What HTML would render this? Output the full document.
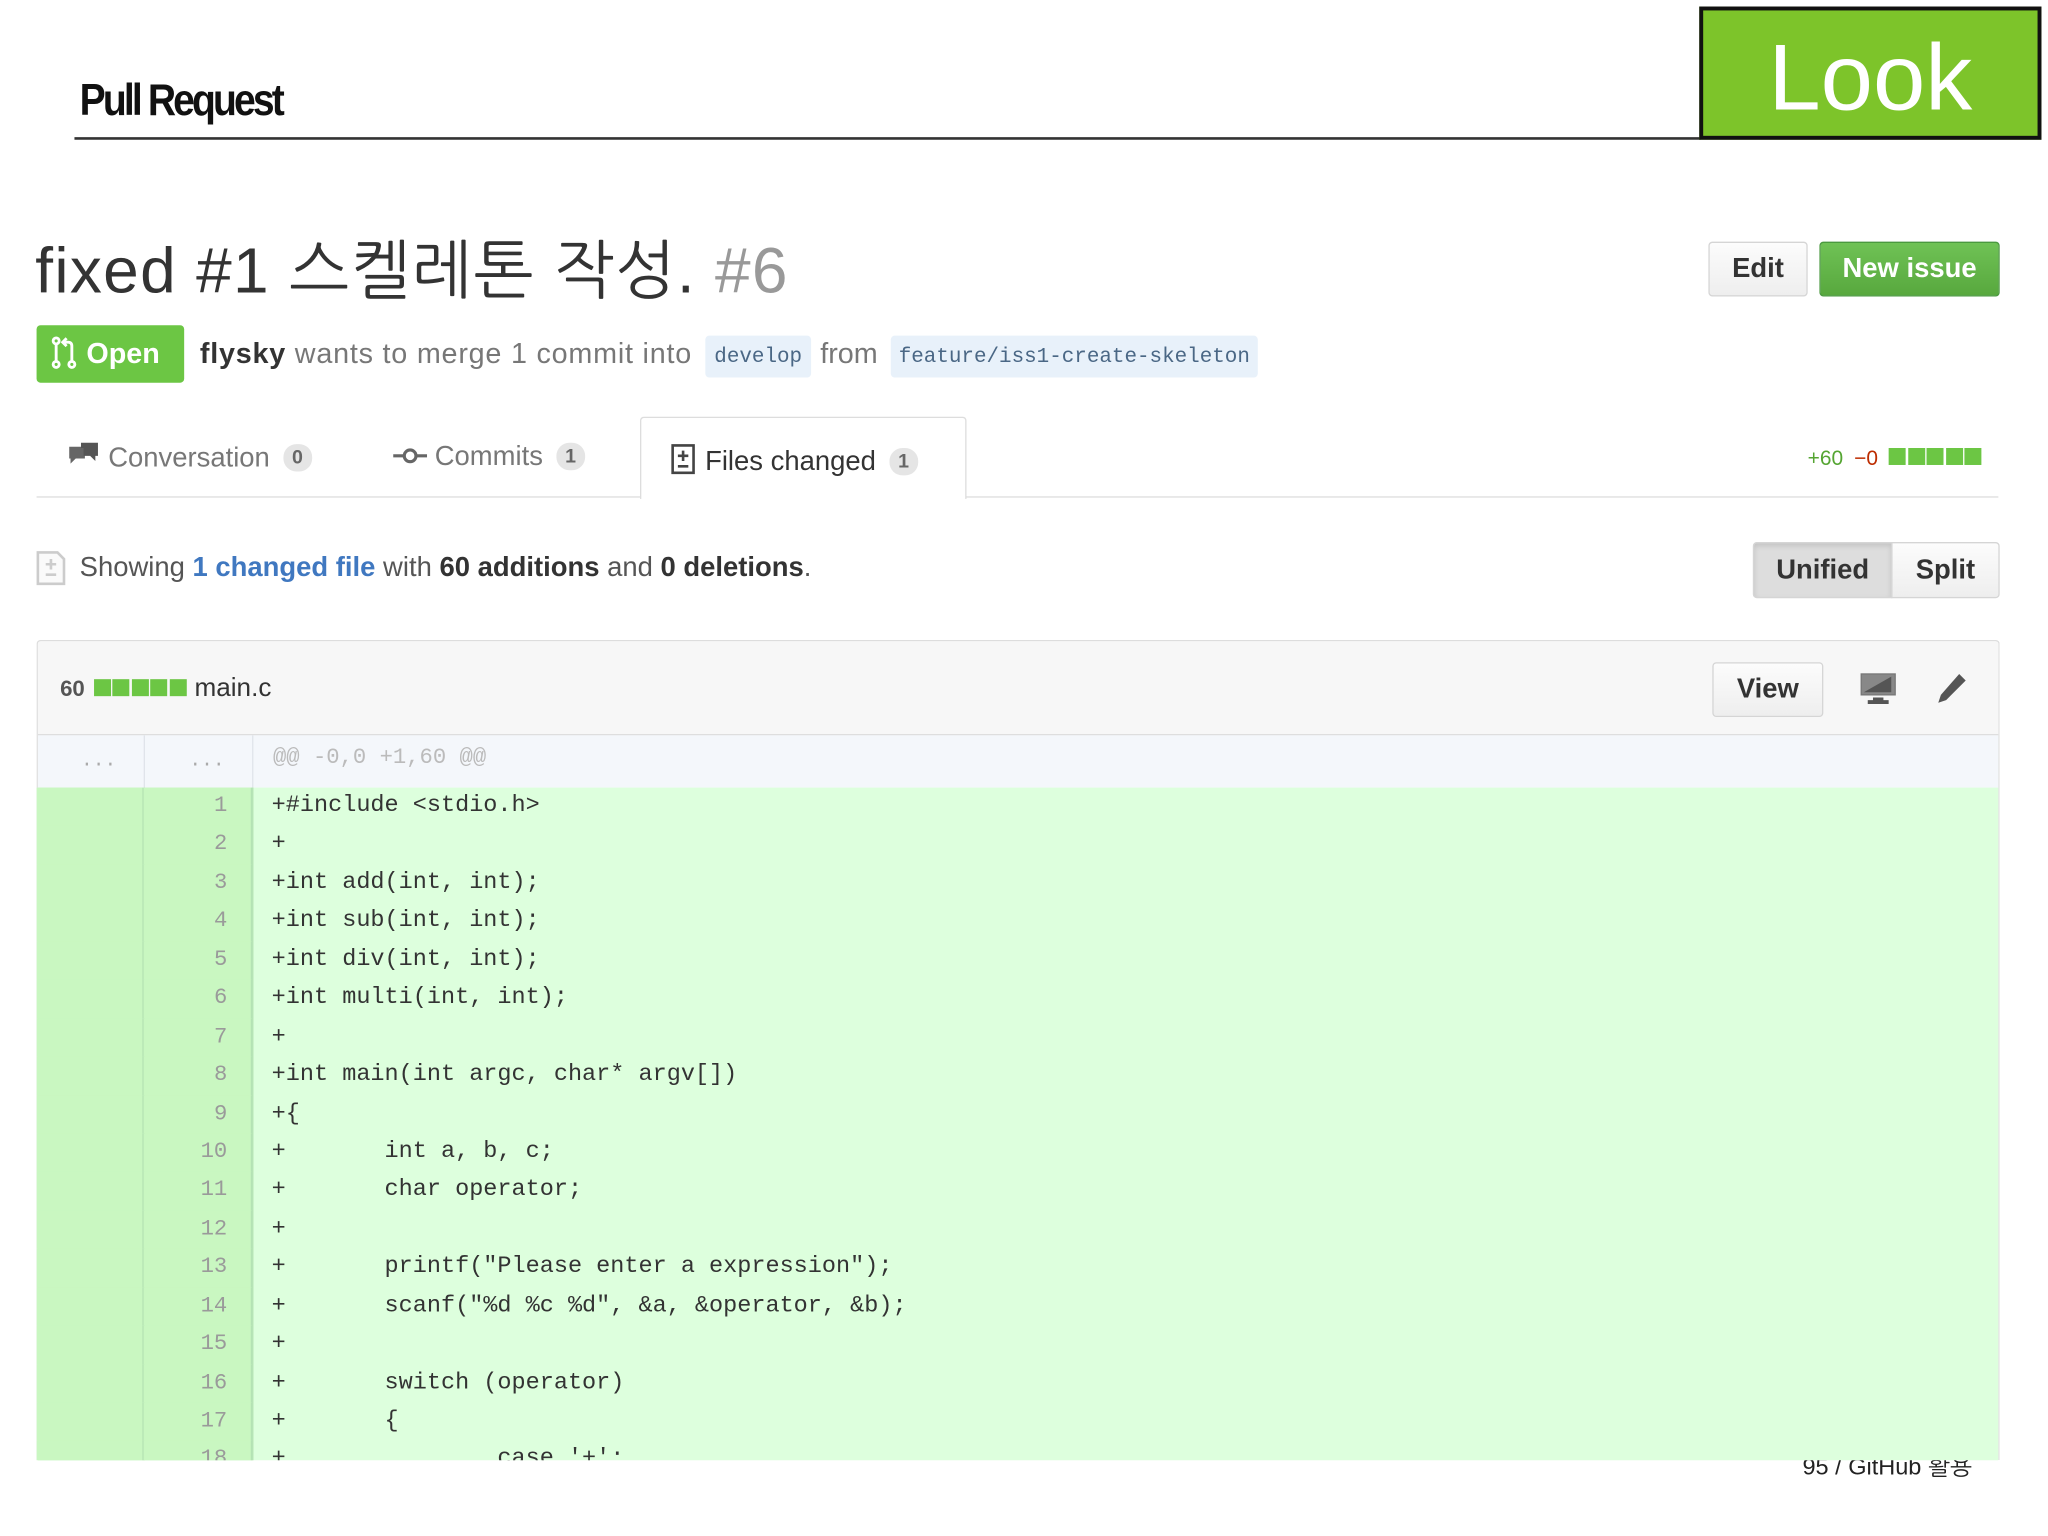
<!DOCTYPE html>
<html><head><meta charset="utf-8">
<style>
*{margin:0;padding:0;box-sizing:border-box}
html,body{width:2048px;height:1536px;overflow:hidden;background:#fff}
#w{position:absolute;left:0;top:0;width:1568px;height:1176px;transform:scale(1.30612);transform-origin:0 0;font-family:"Liberation Sans","NanumGothic","Noto Sans CJK KR",sans-serif;}
.a{position:absolute;white-space:nowrap}
.btn{position:absolute;border:1px solid #d5d5d5;border-radius:3px;background:linear-gradient(#fcfcfc,#eee);font-weight:bold;color:#333;text-align:center}
.mono{font-family:"Liberation Mono","DejaVu Sans Mono",monospace}
.cnt{display:inline-block;background:#e5e5e5;color:#666;border-radius:10px;font-size:15px;font-weight:bold;padding:2px 7px;margin-left:10px;vertical-align:2px}
.bars span{display:inline-block;width:13px;height:13px;background:#6cc644;margin-right:1.5px}
.row{position:absolute;left:0;width:1502px;height:29.44px;line-height:29.44px}
.g1{position:absolute;left:0;width:82px;height:100%;background:#c9f7c1;border-right:1px solid #b4e2b4}
.g2{position:absolute;left:82px;width:83px;height:100%;background:#c9f7c1;border-right:1px solid #b4e2b4;text-align:right;padding-right:18px;color:#9a9a9a;font-size:17px}
.cd{position:absolute;left:180px;font-size:18px;color:#333;white-space:pre}
</style></head><body><div id="w">
<div class="a" style="left:61px;top:58px;font-size:34px;font-weight:bold;letter-spacing:-2.5px;color:#111;transform:scaleX(.88);transform-origin:0 0">Pull Request</div>
<div class="a" style="left:57px;top:105px;width:1245px;height:2px;background:#333"></div>
<div class="a" style="left:1301px;top:5px;width:262px;height:102px;background:#7dc42a;border:3px solid #111;color:#fff;font-size:72px;text-align:center;line-height:104px">Look</div>

<div class="a" style="left:27px;top:177px;font-size:49px;color:#333;letter-spacing:1px">fixed #1 스켈레톤 작성. <span style="color:#999">#6</span></div>
<div class="btn" style="left:1308px;top:185px;width:76px;height:42px;line-height:40px;font-size:21px">Edit</div>
<div class="btn" style="left:1393px;top:185px;width:138px;height:42px;line-height:40px;font-size:21px;background:linear-gradient(#6fc255,#58a83e);border-color:#4a993e;color:#fff">New issue</div>

<div class="a" style="left:28px;top:249px;width:113px;height:44px;background:#6cc644;border-radius:3px;color:#fff;font-weight:bold;font-size:22px;line-height:44px;padding-left:10px">
<svg width="22" height="26" viewBox="0 0 22 26" style="vertical-align:-5px"><g fill="none" stroke="#fff" stroke-width="2.2"><circle cx="5" cy="4" r="2.3"/><circle cx="5" cy="22" r="2.3"/><circle cx="17" cy="22" r="2.3"/><path d="M5 6v14M17 20V8q0-3-3-3h-3M13 2l-3 3 3 3"/></g></svg> Open</div>
<div class="a" style="left:153px;top:258px;font-size:22px;color:#777;letter-spacing:0.6px"><b style="color:#333">flysky</b> wants to merge 1 commit into</div>
<div class="a mono" style="left:540px;top:257px;width:81px;height:32px;background:#e8f1fa;border-radius:3px;color:#4a6785;font-size:16px;line-height:32px;text-align:center">develop</div>
<div class="a" style="left:628px;top:258px;font-size:22px;color:#777">from</div>
<div class="a mono" style="left:682px;top:257px;width:281px;height:32px;background:#e8f1fa;border-radius:3px;color:#4a6785;font-size:16px;line-height:32px;text-align:center">feature/iss1-create-skeleton</div>

<div class="a" style="left:28px;top:380px;width:1502px;height:1px;background:#ddd"></div>
<div class="a" style="left:490px;top:319px;width:250px;height:63px;border:1px solid #ddd;border-bottom:none;border-radius:3px 3px 0 0;background:#fff"></div>
<div class="a" style="left:51px;top:338px;font-size:21px;color:#777"><svg width="26" height="22" viewBox="0 0 26 22" style="vertical-align:-3px"><path d="M2 4h12v9H7l-4 4v-4H2z" fill="#666"/><path d="M11 1h13v10h-2v4l-4-4h-5V5h-2z" fill="#555"/></svg> Conversation<span class="cnt">0</span></div>
<div class="a" style="left:301px;top:338px;font-size:21px;color:#777"><svg width="26" height="14" viewBox="0 0 26 14" style="vertical-align:0"><circle cx="13" cy="7" r="4.5" fill="none" stroke="#666" stroke-width="2.4"/><path d="M0 7h8M18 7h8" stroke="#666" stroke-width="2.4"/></svg> Commits<span class="cnt">1</span></div>
<div class="a" style="left:512px;top:338px;font-size:21px;color:#333"><svg width="22" height="26" viewBox="0 0 22 26" style="vertical-align:-4px"><path d="M3 3h16v21H3z" fill="none" stroke="#444" stroke-width="2"/><path d="M11 7v8M7 11h8M7 19h8" stroke="#444" stroke-width="2"/></svg> Files changed<span class="cnt">1</span></div>
<div class="a" style="left:1384px;top:343px;font-size:16px"><span style="color:#55a532">+60</span> <span style="color:#bd2c00;margin-left:4px">−0</span> <span class="bars" style="margin-left:4px"><span></span><span></span><span></span><span></span><span></span></span></div>

<div class="a" style="left:27px;top:421px"><svg width="24" height="28" viewBox="0 0 24 28"><path d="M2 2h15l5 5v19H2z" fill="#fafafa" stroke="#ccc" stroke-width="2"/><path d="M12 7v8M8 11h8M8 19h8" stroke="#ccc" stroke-width="2"/></svg></div>
<div class="a" style="left:61px;top:423px;font-size:21px;color:#555">Showing <b style="color:#4078c0">1 changed file</b> with <b style="color:#333">60 additions</b> and <b style="color:#333">0 deletions</b>.</div>
<div class="btn" style="left:1342px;top:415px;width:107px;height:43px;line-height:41px;font-size:21px;background:#ddd;border-radius:3px 0 0 3px;box-shadow:inset 0 2px 4px rgba(0,0,0,.12)">Unified</div>
<div class="btn" style="left:1448px;top:415px;width:83px;height:43px;line-height:41px;font-size:21px;border-radius:0 3px 3px 0">Split</div>

<div class="a" style="left:28px;top:490px;width:1503px;height:628px;border:1px solid #ddd;border-bottom:none;border-radius:3px 3px 0 0;overflow:hidden">
 <div style="position:absolute;left:0;top:0;width:100%;height:72px;background:#f7f7f7;border-bottom:1px solid #ddd"></div>
 <div class="a" style="left:17px;top:25px;font-size:17px;color:#555;font-weight:bold">60 <span class="bars" style="margin-left:2px"><span></span><span></span><span></span><span></span><span></span></span> <span style="font-weight:normal;font-size:20px;color:#333">main.c</span></div>
 <div class="btn" style="left:1282px;top:16px;width:85px;height:42px;line-height:40px;font-size:21px">View</div>
 <svg class="a" style="left:1394px;top:23px" width="30" height="26" viewBox="0 0 30 26"><rect x="2" y="2" width="26" height="16" fill="#888" stroke="#777"/><path d="M4 16L25 4v12z" fill="#555"/><path d="M11 20h8v2h4v3H7v-3h4z" fill="#555"/></svg>
 <svg class="a" style="left:1451px;top:22px" width="28" height="28" viewBox="0 0 28 28"><path d="M20 3l5 5L10 23l-6 2 2-6z" fill="#555"/></svg>
 <div style="position:absolute;left:0;top:72px;width:100%;height:40px;background:#f4f7fb"></div>
 <div style="position:absolute;left:81px;top:72px;width:1px;height:40px;background:#e0e4ea"></div>
 <div style="position:absolute;left:164px;top:72px;width:1px;height:40px;background:#e0e4ea"></div>
 <div class="a mono" style="left:33px;top:83px;font-size:15px;color:#aaa">...</div>
 <div class="a mono" style="left:116px;top:83px;font-size:15px;color:#aaa">...</div>
 <div class="a mono" style="left:180px;top:80px;font-size:17px;color:#bbb">@@ -0,0 +1,60 @@</div>
 <div style="position:absolute;left:0;top:112px;width:100%;height:600px;background:#ddffdd"></div>
 <div class="a" style="left:0;top:112px;width:82px;height:600px;background:#c9f7c1;border-right:1px solid #b4e2b4"></div>
 <div class="a" style="left:82px;top:112px;width:83px;height:600px;background:#c9f7c1;border-right:1px solid #b4e2b4"></div>
</div>
<div id="code" class="a mono" style="left:28px;top:603px;width:1503px;height:515px;overflow:hidden"></div>
<div class="a" style="left:1380px;top:1118px;width:150px;height:14px;overflow:hidden"><div style="margin-top:-6px;font-size:18px;color:#222;white-space:nowrap">95 / GitHub 활용</div></div>
</div>
<script>
var L=["+#include <stdio.h>","+","+int add(int, int);","+int sub(int, int);","+int div(int, int);","+int multi(int, int);","+","+int main(int argc, char* argv[])","+{","+       int a, b, c;","+       char operator;","+","+       printf(\"Please enter a expression\");","+       scanf(\"%d %c %d\", &a, &operator, &b);","+","+       switch (operator)","+       {","+               case '+':"];
var h="";for(var i=0;i<L.length;i++){h+='<div class="row" style="top:'+(i*29.44)+'px"><div class="g1"></div><div class="g2">'+(i+1)+'</div><div class="cd"></div></div>';}
var c=document.getElementById('code');c.innerHTML=h;var cd=c.querySelectorAll('.cd');for(var i=0;i<L.length;i++)cd[i].textContent=L[i];
</script>
</body></html>
